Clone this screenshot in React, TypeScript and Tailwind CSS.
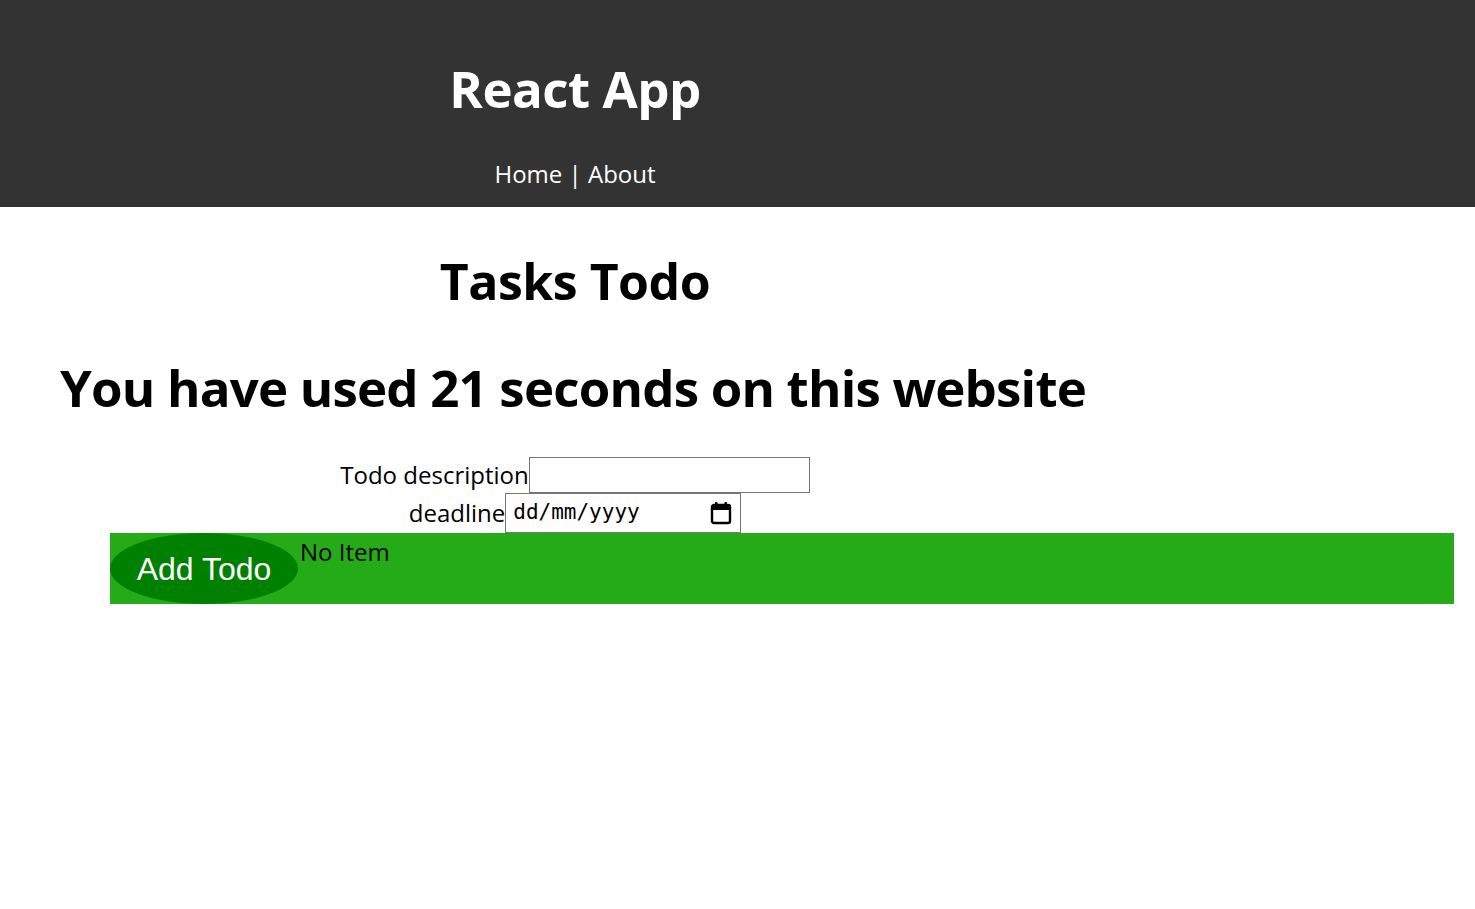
import React from 'react';

function CalendarIcon() {
  return (
    <svg width="22" height="24" viewBox="0 0 22 24" fill="none">
      <rect x="2" y="4" width="18" height="18" rx="2" stroke="#000" strokeWidth="2.4" />
      <rect x="2" y="4" width="18" height="5" fill="#000" />
      <rect x="5" y="1" width="2.6" height="5" rx="1" fill="#000" />
      <rect x="14.4" y="1" width="2.6" height="5" rx="1" fill="#000" />
    </svg>
  );
}

export default function App() {
  const font = { fontFamily: '"Open Sans", "Noto Sans", sans-serif' };
  return (
    <div className="min-h-[909px] bg-white text-black" style={font}>
      <header className="h-[207px] bg-[#333333] text-white">
        <div className="w-[1150px] text-center">
          <h1 className="pt-[52px] text-[51px] leading-[72px] font-bold tracking-[-0.5px]">React App</h1>
          <nav className="mt-[34px] text-[24px] leading-[32px]">
            <a className="text-white">Home</a> | <a className="text-white">About</a>
          </nav>
        </div>
      </header>

      <main>
        <h2 className="w-[1150px] mt-[38px] text-center text-[50px] leading-[72px] font-bold tracking-[-0.5px]">Tasks Todo</h2>
        <h2 className="ml-[60px] mt-[34px] text-[51px] leading-[72px] font-bold tracking-[-0.8px]">
          You have used 21 seconds on this website
        </h2>

        <form className="w-[1150px] mt-[34px] flex flex-col items-center">
          <div className="flex items-center">
            <label className="text-[24px] leading-[32px]">Todo description</label>
            <input type="text" className="w-[281px] h-[36px] border border-[#767676] bg-white" />
          </div>
          <div className="flex items-center">
            <label className="text-[24px] leading-[32px]">deadline</label>
            <div className="w-[236px] h-[40px] border border-[#767676] flex items-center justify-between pl-[7px] pr-[8px]">
              <span className="text-[21px]" style={{ fontFamily: '"DejaVu Sans Mono", monospace' }}>dd/mm/yyyy</span>
              <CalendarIcon />
            </div>
          </div>
        </form>

        <div className="ml-[110px] mr-[21px] h-[71px] bg-[#24ab17] flex items-start">
          <button
            type="button"
            className="w-[188px] h-[71px] rounded-[50%] bg-[#008000] text-white text-[32px]"
            style={{ fontFamily: '"Liberation Sans", Arial, sans-serif' }}
          >
            Add Todo
          </button>
          <p className="ml-[2px] mt-[3px] text-[24px] leading-[32px]">No Item</p>
        </div>
      </main>
    </div>
  );
}
